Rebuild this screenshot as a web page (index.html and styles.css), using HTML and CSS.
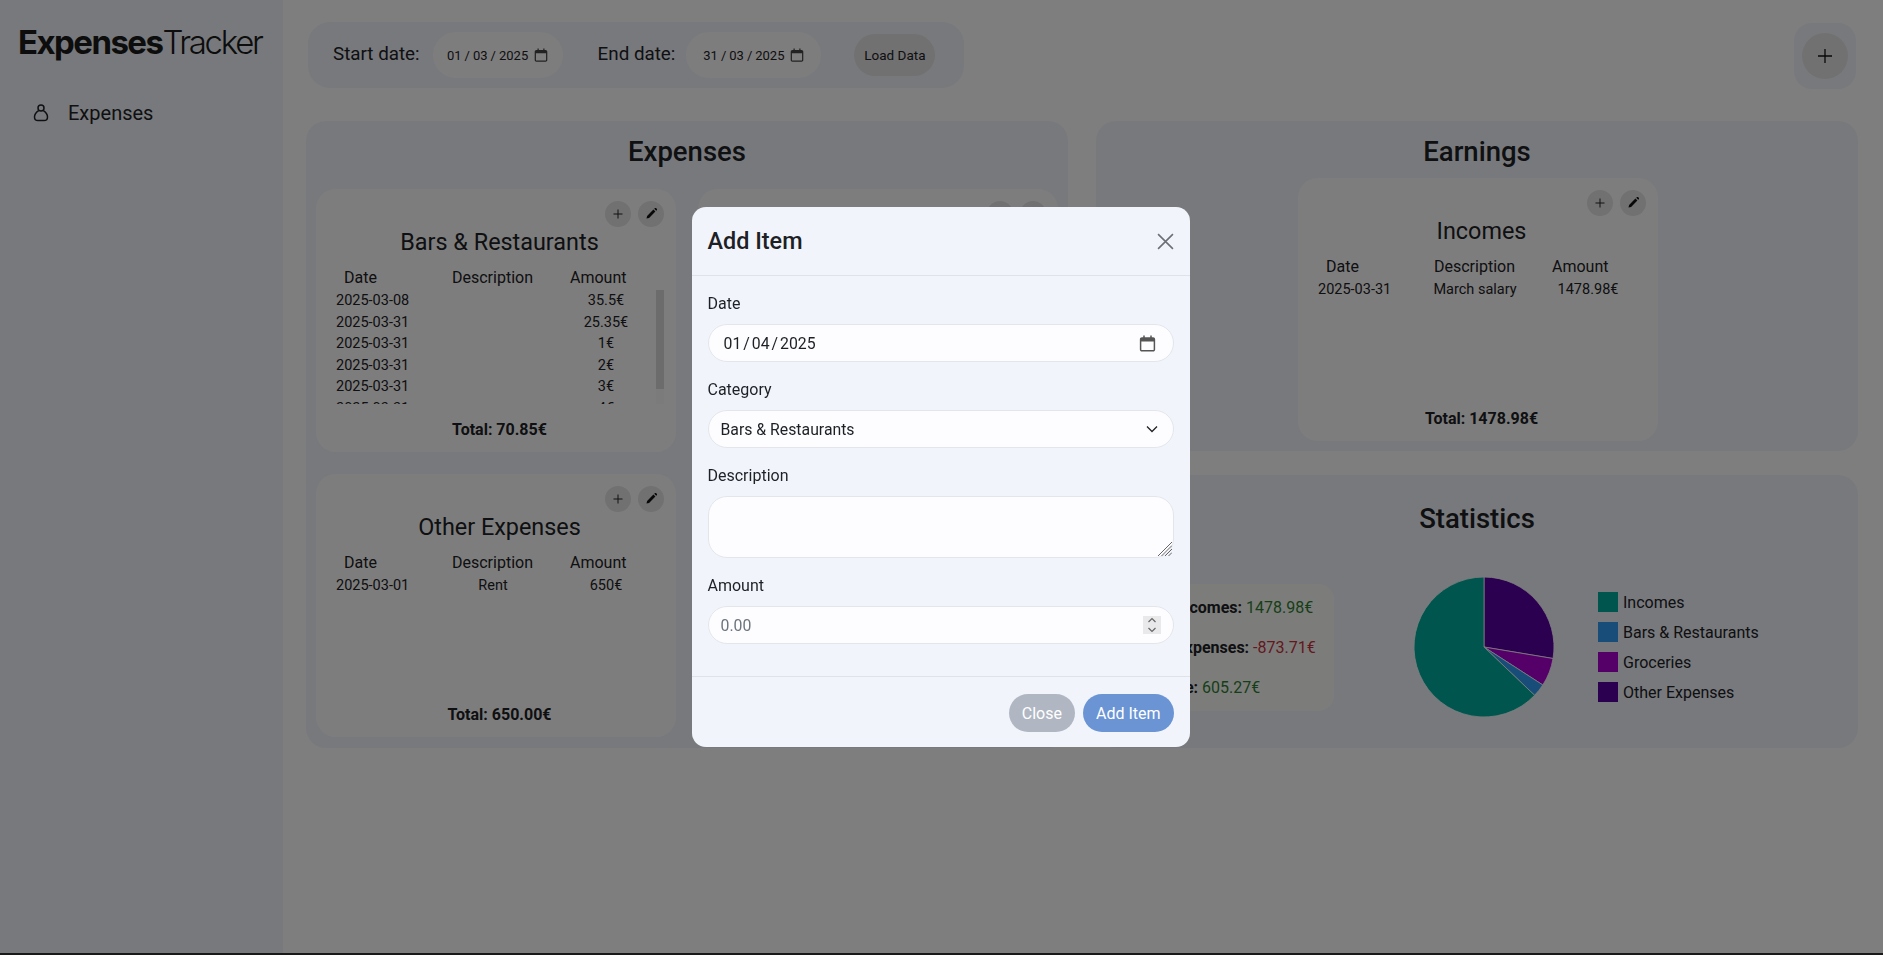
FILE: index.html
```html
<!DOCTYPE html>
<html>
<head>
  <title>Expenses Tracker</title>
  <link rel="stylesheet" href="styles.css">
</head>
<body>

  <div class="app">
    <aside class="sidebar">
      <div class="logo"><b>Expenses</b><span>Tracker</span></div>
      <a class="nav-item">
        <svg class="nav-icon" viewBox="0 0 16 18" fill="none" stroke="currentColor" stroke-width="1.5">
          <circle cx="8" cy="4" r="3"/>
          <path d="M5.6 6.6 C3.5 8 1.5 10 1.5 13 C1.5 15.6 2.8 16.6 5 16.6 H11 C13.2 16.6 14.5 15.6 14.5 13 C14.5 10 12.5 8 10.4 6.6"/>
        </svg>
        Expenses
      </a>
    </aside>

    <main class="main">
      <div class="top-row">
        <div class="date-bar">
          <label class="date-label">Start date:</label>
          <div class="date-input start">01<i>/</i>03<i>/</i>2025
            <svg class="cal" viewBox="0 0 16 16"><use href="#calendar"/></svg>
          </div>
          <label class="date-label end-label">End date:</label>
          <div class="date-input end">31<i>/</i>03<i>/</i>2025
            <svg class="cal" viewBox="0 0 16 16"><use href="#calendar"/></svg>
          </div>
          <button class="load-btn">Load Data</button>
        </div>
        <div class="add-box">
          <button class="add-btn">
            <svg viewBox="0 0 16 16" width="16" height="16" stroke="#111" stroke-width="1.3"><path d="M8 1V15M1 8H15"/></svg>
          </button>
        </div>
      </div>

      <div class="dashboard">
        <section class="panel">
          <h2 class="panel-title">Expenses</h2>
          <div class="card-grid">

            <div class="card">
              <div class="card-actions">
                <button class="round-btn"><svg viewBox="0 0 16 16"><use href="#plus"/></svg></button>
                <button class="round-btn"><svg viewBox="0 0 16 16"><use href="#pencil"/></svg></button>
              </div>
              <h3 class="card-title">Bars &amp; Restaurants</h3>
              <div class="list-head"><span>Date</span><span>Description</span><span>Amount</span></div>
              <div class="list-wrap">
                <div class="list-body">
                  <div class="list-row"><span>2025-03-08</span><span></span><span>35.5€</span></div>
                  <div class="list-row"><span>2025-03-31</span><span></span><span>25.35€</span></div>
                  <div class="list-row"><span>2025-03-31</span><span></span><span>1€</span></div>
                  <div class="list-row"><span>2025-03-31</span><span></span><span>2€</span></div>
                  <div class="list-row"><span>2025-03-31</span><span></span><span>3€</span></div>
                  <div class="list-row"><span>2025-03-31</span><span></span><span>4€</span></div>
                </div>
                <div class="scroll-track"><div class="scroll-thumb"></div></div>
              </div>
              <div class="card-total">Total: 70.85€</div>
            </div>

            <div class="card">
              <div class="card-actions">
                <button class="round-btn"><svg viewBox="0 0 16 16"><use href="#plus"/></svg></button>
                <button class="round-btn"><svg viewBox="0 0 16 16"><use href="#pencil"/></svg></button>
              </div>
            </div>

            <div class="card">
              <div class="card-actions">
                <button class="round-btn"><svg viewBox="0 0 16 16"><use href="#plus"/></svg></button>
                <button class="round-btn"><svg viewBox="0 0 16 16"><use href="#pencil"/></svg></button>
              </div>
              <h3 class="card-title">Other Expenses</h3>
              <div class="list-head"><span>Date</span><span>Description</span><span>Amount</span></div>
              <div class="list-wrap">
                <div class="list-body">
                  <div class="list-row"><span>2025-03-01</span><span>Rent</span><span>650€</span></div>
                </div>
              </div>
              <div class="card-total">Total: 650.00€</div>
            </div>

          </div>
        </section>

        <div class="right-col">
          <section class="panel earnings">
            <h2 class="panel-title">Earnings</h2>
            <div class="card income-card">
              <div class="card-actions">
                <button class="round-btn"><svg viewBox="0 0 16 16"><use href="#plus"/></svg></button>
                <button class="round-btn"><svg viewBox="0 0 16 16"><use href="#pencil"/></svg></button>
              </div>
              <h3 class="card-title">Incomes</h3>
              <div class="list-head"><span>Date</span><span>Description</span><span>Amount</span></div>
              <div class="list-wrap">
                <div class="list-body">
                  <div class="list-row"><span>2025-03-31</span><span>March salary</span><span>1478.98€</span></div>
                </div>
              </div>
              <div class="card-total">Total: 1478.98€</div>
            </div>
          </section>

          <section class="panel statistics">
            <h2 class="panel-title">Statistics</h2>
            <div class="stats-row">
              <div class="summary">
                <p><b>Total Incomes:</b> <span class="pos">1478.98€</span></p>
                <p><b>Total Expenses:</b> <span class="neg">-873.71€</span></p>
                <p><b>Balance:</b> <span class="pos">605.27€</span></p>
              </div>
              <svg class="pie" viewBox="0 0 140 140" stroke="#fff" stroke-width="0.8">
                <path fill="#5800a0" d="M70 70 L70 0 A70 70 0 0 1 139.05 81.5 Z"/>
                <path fill="#a800d0" d="M70 70 L139.05 81.5 A70 70 0 0 1 128.8 107.97 Z"/>
                <path fill="#2e9af0" d="M70 70 L128.8 107.97 A70 70 0 0 1 120.63 118.34 Z"/>
                <path fill="#00aa9c" d="M70 70 L120.63 118.34 A70 70 0 1 1 70 0 Z"/>
              </svg>
              <ul class="legend">
                <li><i class="swatch incomes"></i>Incomes</li>
                <li><i class="swatch bars"></i>Bars &amp; Restaurants</li>
                <li><i class="swatch groceries"></i>Groceries</li>
                <li><i class="swatch other"></i>Other Expenses</li>
              </ul>
            </div>
          </section>
        </div>
      </div>
    </main>
  </div>

  <div class="backdrop"></div>

  <div class="modal-wrap">
    <div class="modal">
      <div class="modal-header">
        <h4 class="modal-title">Add Item</h4>
        <svg class="modal-close" viewBox="0 0 16 16" stroke="#6c7076" stroke-width="1.5"><path d="M1 1L15 15M15 1L1 15"/></svg>
      </div>
      <div class="modal-body">
        <label class="form-label">Date</label>
        <div class="control date-control">
          <span>01<i>/</i>04<i>/</i>2025</span>
          <svg class="cal-big" viewBox="0 0 16 16"><use href="#calendar"/></svg>
        </div>
        <label class="form-label">Category</label>
        <div class="control">
          <span>Bars &amp; Restaurants</span>
          <svg class="chevron" viewBox="0 0 12 8" fill="none" stroke="#222" stroke-width="1.3"><path d="M1 1.5L6 6.5L11 1.5"/></svg>
        </div>
        <label class="form-label">Description</label>
        <div class="text-wrap">
          <textarea class="text-control"></textarea>
          <svg class="resizer" viewBox="0 0 14 14" stroke="#555" stroke-width="0.9"><path d="M0 14L14 0M3.5 14L14 3.5M7 14L14 7M10.5 14L14 10.5"/></svg>
        </div>
        <label class="form-label">Amount</label>
        <div class="control">
          <span class="placeholder">0.00</span>
          <span class="spinner">
            <svg viewBox="0 0 10 16" fill="none" stroke="#666" stroke-width="1.2"><path d="M1.5 5L5 1.5L8.5 5M1.5 11L5 14.5L8.5 11"/></svg>
          </span>
        </div>
      </div>
      <div class="modal-footer">
        <button class="btn btn-close">Close</button>
        <button class="btn btn-add">Add Item</button>
      </div>
    </div>
  </div>

  <svg class="icon-defs">
    <symbol id="calendar" viewBox="0 0 16 16">
      <path fill="currentColor" d="M4 0.5H5.4V2.2H10.6V0.5H12V2.2H13.2C14.4 2.2 15.2 3 15.2 4.2V13.6C15.2 14.8 14.4 15.6 13.2 15.6H2.8C1.6 15.6 0.8 14.8 0.8 13.6V4.2C0.8 3 1.6 2.2 2.8 2.2H4ZM2.2 6V13.6C2.2 14 2.4 14.2 2.8 14.2H13.2C13.6 14.2 13.8 14 13.8 13.6V6Z"/>
    </symbol>
    <symbol id="plus" viewBox="0 0 16 16">
      <path stroke="#222" stroke-width="1" d="M8 3.5V12.5M3.5 8H12.5"/>
    </symbol>
    <symbol id="pencil" viewBox="0 0 16 16">
      <path fill="#111" d="M3.5 12.5L4.1 9.9L10.4 3.6L12.4 5.6L6.1 11.9ZM11.2 2.8L11.8 2.2C12.2 1.8 12.8 1.8 13.2 2.2L13.8 2.8C14.2 3.2 14.2 3.8 13.8 4.2L13.2 4.8Z"/>
    </symbol>
  </svg>

</body>
</html>
```

FILE: styles.css
```css
* {
  box-sizing: border-box;
}
body {
  margin: 0;
  background: #333;
  font-family: Roboto, "Liberation Sans", sans-serif;
  color: #1d2125;
  overflow: hidden;
}
h2, h3, h4, p, ul {
  margin: 0;
  padding: 0;
}
button {
  font-family: inherit;
  border: none;
  padding: 0;
  color: inherit;
}
.icon-defs {
  display: none;
}

/* page */
.app {
  display: flex;
  height: 953px;
  background: #fcfcfc;
}
.sidebar {
  width: 283px;
  flex-shrink: 0;
  background: #eff3f9;
  padding: 22px 0 0 18px;
}
.logo {
  font-family: Inter, sans-serif;
  font-size: 33px;
  line-height: 40px;
  color: #1a1a1a;
}
.logo b {
  font-weight: 700;
  letter-spacing: -1.55px;
}
.logo span {
  font-weight: 300;
  letter-spacing: -2.3px;
}
.nav-item {
  display: flex;
  align-items: center;
  gap: 19px;
  margin: 37px 0 0 15px;
  font-size: 20px;
  line-height: 28px;
}
.nav-icon {
  width: 16px;
  height: 18px;
}

.main {
  flex: 1;
  padding: 22px 25px 0 23px;
}
.top-row {
  display: flex;
  justify-content: space-between;
  height: 68px;
  padding: 0 2px;
}
.date-bar {
  display: flex;
  align-items: center;
  height: 66px;
  padding: 0 29px 0 25px;
  border-radius: 22px;
  background: #eff3f9;
}
.date-label {
  font-size: 18.8px;
  margin-top: -3px;
}
.end-label {
  margin-left: 35px;
}
.date-input {
  display: flex;
  align-items: center;
  justify-content: center;
  height: 46px;
  border-radius: 23px;
  background: #fbfbfb;
  font-size: 13px;
}
.date-input i, .date-control i {
  font-style: normal;
  margin: 0 3px;
}
.date-input.start {
  width: 130px;
  margin-left: 13px;
}
.date-input.end {
  width: 135px;
  margin-left: 11px;
}
.cal {
  width: 14px;
  height: 14px;
  margin-left: 6px;
  color: #444;
}
.load-btn {
  width: 81px;
  height: 42px;
  margin-left: 33px;
  border-radius: 21px;
  background: #e2e2e2;
  font-size: 13.5px;
}
.add-box {
  display: flex;
  align-items: center;
  justify-content: center;
  width: 62px;
  height: 66px;
  margin-top: 1px;
  border-radius: 18px;
  background: #eff3f9;
}
.add-btn {
  display: flex;
  align-items: center;
  justify-content: center;
  width: 46px;
  height: 46px;
  border-radius: 50%;
  background: #e2e2e2;
}

.dashboard {
  display: grid;
  grid-template-columns: 762px 762px;
  column-gap: 28px;
  align-items: start;
  margin-top: 31px;
}
.right-col {
  display: flex;
  flex-direction: column;
  gap: 24px;
}
.panel {
  padding: 14px 10px 11px;
  border-radius: 20px;
  background: #eff3f9;
}
.panel-title {
  font-size: 27.5px;
  line-height: 33px;
  font-weight: 500;
  text-align: center;
}
.card-grid {
  display: grid;
  grid-template-columns: 360px 360px;
  gap: 22px;
  margin-top: 21px;
}
.card {
  height: 263px;
  border-radius: 20px;
  background: #fbfbfb;
}
.earnings {
  height: 330px;
}
.income-card {
  width: 360px;
  margin: 10px 0 0 192px;
}
.card-actions {
  display: flex;
  justify-content: flex-end;
  gap: 7px;
  height: 39px;
  padding: 12px 12px 0 0;
}
.round-btn {
  display: flex;
  align-items: center;
  justify-content: center;
  width: 26px;
  height: 26px;
  border-radius: 50%;
  background: #e2e2e2;
}
.round-btn svg {
  width: 16px;
  height: 16px;
}
.card-title {
  font-size: 23.4px;
  line-height: 28px;
  font-weight: 400;
  text-align: center;
  padding-left: 7px;
}
.list-head {
  display: grid;
  grid-template-columns: 108px 118px auto;
  margin-top: 12px;
  padding-left: 28px;
  font-size: 16px;
  line-height: 19px;
}
.list-wrap {
  position: relative;
  height: 114px;
  margin-top: 3px;
}
.list-body {
  height: 100%;
  overflow: hidden;
}
.list-row {
  display: grid;
  grid-template-columns: 112px 90px 136px;
  padding-left: 20px;
  font-size: 14.5px;
  line-height: 21.6px;
}
.list-row span:nth-child(n+2) {
  text-align: center;
}
.scroll-track {
  position: absolute;
  top: 0;
  right: 12px;
  bottom: 0;
  width: 8px;
  background: #f6f6f6;
}
.scroll-thumb {
  height: 99px;
  background: #d8d8d8;
}
.card-total {
  margin-top: 16px;
  padding-left: 7px;
  font-size: 16px;
  line-height: 19px;
  font-weight: 700;
  text-align: center;
}

.statistics {
  height: 273px;
  padding-top: 27px;
}
.stats-row {
  display: flex;
  align-items: center;
  margin-top: 42px;
}
.summary {
  width: 222px;
  height: 127px;
  margin-left: 6px;
  padding: 14px 0 0 24px;
  border-radius: 16px;
  background: #f9faf6;
  font-size: 16px;
}
.summary p {
  line-height: 19px;
  margin-bottom: 21px;
}
.pos {
  color: #2e7d32;
}
.neg {
  color: #c8303c;
}
.pie {
  width: 140px;
  height: 140px;
  margin-left: 80px;
}
.legend {
  list-style: none;
  margin-left: 44px;
  font-size: 16px;
}
.legend li {
  display: flex;
  align-items: center;
  gap: 5px;
  height: 20px;
  margin-bottom: 10px;
}
.legend li:last-child {
  margin-bottom: 0;
}
.swatch {
  width: 20px;
  height: 20px;
}
.swatch.incomes { background: #00aa9c; }
.swatch.bars { background: #2e9af0; }
.swatch.groceries { background: #a800d0; }
.swatch.other { background: #5800a0; }

/* modal */
.backdrop {
  position: fixed;
  inset: 0;
  background: rgba(0, 0, 0, 0.5);
}
.modal-wrap {
  position: fixed;
  inset: 0;
  display: flex;
  justify-content: center;
  padding: 207px 2px 0 0;
}
.modal {
  width: 498px;
  height: 540px;
  border-radius: 14px;
  background: #f1f5fb;
  display: flex;
  flex-direction: column;
}
.modal-header {
  display: flex;
  align-items: center;
  justify-content: space-between;
  height: 69px;
  padding: 0 16px;
  border-bottom: 1px solid #dee2e9;
}
.modal-title {
  font-size: 23.4px;
  font-weight: 500;
}
.modal-close {
  width: 17px;
  height: 17px;
}
.modal-body {
  flex: 1;
  padding: 18px 16px 0;
}
.form-label {
  display: block;
  font-size: 16px;
  line-height: 19px;
  margin-bottom: 11px;
}
.control {
  display: flex;
  align-items: center;
  justify-content: space-between;
  height: 38px;
  margin-bottom: 18px;
  padding: 0 12px;
  border: 1px solid #e2e5ec;
  border-radius: 19px;
  background: #fdfdff;
  font-size: 15.8px;
}
.date-control {
  padding: 0 17px 0 15px;
}
.date-control i {
  margin: 0 2px;
}
.cal-big {
  width: 17px;
  height: 17px;
  color: #555;
}
.chevron {
  width: 12px;
  height: 8px;
  margin-right: 3px;
}
.text-wrap {
  position: relative;
  height: 62px;
  margin-bottom: 18px;
}
.text-control {
  display: block;
  width: 100%;
  height: 100%;
  border: 1px solid #e2e5ec;
  border-radius: 19px;
  background: #fdfdff;
  outline: none;
  resize: none;
}
.resizer {
  position: absolute;
  right: 2px;
  bottom: 2px;
  width: 14px;
  height: 14px;
}
.placeholder {
  color: #6c757d;
}
.spinner {
  display: flex;
  align-items: center;
  justify-content: center;
  width: 18px;
  height: 18px;
  background: #e9e9ec;
}
.spinner svg {
  width: 10px;
  height: 16px;
}
.modal-footer {
  display: flex;
  justify-content: flex-end;
  gap: 8px;
  height: 71px;
  padding: 17px 16px 0;
  border-top: 1px solid #dee2e9;
}
.btn {
  height: 38px;
  border-radius: 19px;
  padding: 0 13px;
  font-size: 16px;
  color: #fff;
}
.btn-close {
  background: #b0b7c3;
}
.btn-add {
  background: #6a94d4;
}
```
